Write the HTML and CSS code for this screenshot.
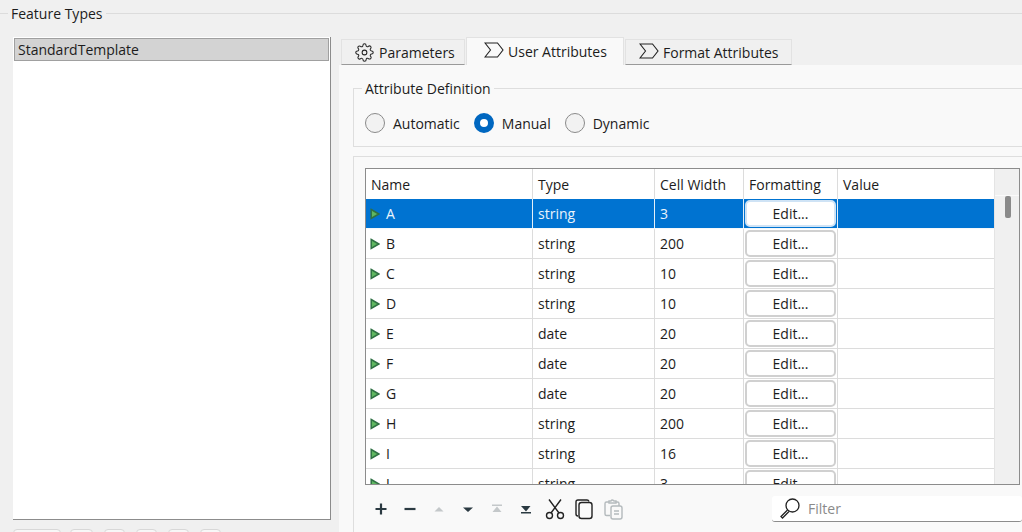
FILE: index.html
```html
<!DOCTYPE html>
<html lang="en">
<head>
    <meta charset="UTF-8">
    <title>Feature Types</title>
    <link rel="stylesheet" href="styles.css">
</head>
<body>
    <svg class="defs" width="0" height="0">
        <symbol id="tag" viewBox="0 0 20 18">
            <path d="M1 2H13.5L19 9L13.5 16H1L6.5 9Z" fill="none" stroke="#222" stroke-width="1.1"/>
        </symbol>
        <symbol id="arrow" viewBox="0 0 10 12">
            <path d="M1.2 1.5L8.8 6L1.2 10.5Z" fill="#5fb760" stroke="#2f7044" stroke-width="1.5"/>
        </symbol>
    </svg>

    <div class="group-title">Feature Types</div>

    <div class="split">
        <div class="left-col">
            <div class="listbox">
                <div class="list-item">StandardTemplate</div>
            </div>
            <div class="list-buttons">
                <span class="mini-btn wide"></span>
                <span class="mini-btn first"></span>
                <span class="mini-btn"></span>
                <span class="mini-btn"></span>
                <span class="mini-btn"></span>
                <span class="mini-btn"></span>
            </div>
        </div>

        <div class="right-col">
            <div class="tabs">
                <div class="tab tab-params">
                    <svg class="tab-icon" viewBox="0 0 24 24" fill="none" stroke="#222" stroke-width="1.3"><circle cx="12" cy="12" r="3"/><path d="M19.4 15a1.65 1.65 0 0 0 .33 1.82l.06.06a2 2 0 0 1 0 2.83 2 2 0 0 1-2.83 0l-.06-.06a1.65 1.65 0 0 0-1.82-.33 1.65 1.65 0 0 0-1 1.51V21a2 2 0 0 1-2 2 2 2 0 0 1-2-2v-.09A1.65 1.65 0 0 0 9 19.4a1.65 1.65 0 0 0-1.82.33l-.06.06a2 2 0 0 1-2.83 0 2 2 0 0 1 0-2.83l.06-.06a1.65 1.65 0 0 0 .33-1.82 1.65 1.65 0 0 0-1.51-1H3a2 2 0 0 1-2-2 2 2 0 0 1 2-2h.09A1.65 1.65 0 0 0 4.6 9a1.65 1.65 0 0 0-.33-1.82l-.06-.06a2 2 0 0 1 0-2.83 2 2 0 0 1 2.83 0l.06.06a1.65 1.65 0 0 0 1.82.33H9a1.65 1.65 0 0 0 1-1.51V3a2 2 0 0 1 2-2 2 2 0 0 1 2 2v.09a1.65 1.65 0 0 0 1 1.51 1.65 1.65 0 0 0 1.82-.33l.06-.06a2 2 0 0 1 2.83 0 2 2 0 0 1 0 2.83l-.06.06a1.65 1.65 0 0 0-.33 1.82V9a1.65 1.65 0 0 0 1.51 1H21a2 2 0 0 1 2 2 2 2 0 0 1-2 2h-.09a1.65 1.65 0 0 0-1.51 1z"/></svg>
                    Parameters
                </div>
                <div class="tab tab-active">
                    <svg class="tab-icon tag"><use href="#tag"/></svg>
                    User Attributes
                </div>
                <div class="tab tab-format">
                    <svg class="tab-icon tag"><use href="#tag"/></svg>
                    Format Attributes
                </div>
            </div>

            <div class="panel">
                <fieldset class="attr-def">
                    <legend>Attribute Definition</legend>
                    <div class="radios">
                        <span class="radio"></span><label class="radio-label">Automatic</label>
                        <span class="radio checked"></span><label class="radio-label">Manual</label>
                        <span class="radio"></span><label class="radio-label">Dynamic</label>
                    </div>
                </fieldset>

                <div class="attr-table-group">
                    <div class="table-frame">
                        <div class="grid">
                            <div class="row head">
                                <div class="cell">Name</div><div class="cell">Type</div><div class="cell">Cell Width</div><div class="cell">Formatting</div><div class="cell">Value</div>
                            </div>
                            <div class="row selected">
                                <div class="cell name"><svg class="arrow"><use href="#arrow"/></svg>A</div><div class="cell">string</div><div class="cell">3</div><div class="cell btn-cell"><span class="edit">Edit...</span></div><div class="cell"></div>
                            </div>
                            <div class="row">
                                <div class="cell name"><svg class="arrow"><use href="#arrow"/></svg>B</div><div class="cell">string</div><div class="cell">200</div><div class="cell btn-cell"><span class="edit">Edit...</span></div><div class="cell"></div>
                            </div>
                            <div class="row">
                                <div class="cell name"><svg class="arrow"><use href="#arrow"/></svg>C</div><div class="cell">string</div><div class="cell">10</div><div class="cell btn-cell"><span class="edit">Edit...</span></div><div class="cell"></div>
                            </div>
                            <div class="row">
                                <div class="cell name"><svg class="arrow"><use href="#arrow"/></svg>D</div><div class="cell">string</div><div class="cell">10</div><div class="cell btn-cell"><span class="edit">Edit...</span></div><div class="cell"></div>
                            </div>
                            <div class="row">
                                <div class="cell name"><svg class="arrow"><use href="#arrow"/></svg>E</div><div class="cell">date</div><div class="cell">20</div><div class="cell btn-cell"><span class="edit">Edit...</span></div><div class="cell"></div>
                            </div>
                            <div class="row">
                                <div class="cell name"><svg class="arrow"><use href="#arrow"/></svg>F</div><div class="cell">date</div><div class="cell">20</div><div class="cell btn-cell"><span class="edit">Edit...</span></div><div class="cell"></div>
                            </div>
                            <div class="row">
                                <div class="cell name"><svg class="arrow"><use href="#arrow"/></svg>G</div><div class="cell">date</div><div class="cell">20</div><div class="cell btn-cell"><span class="edit">Edit...</span></div><div class="cell"></div>
                            </div>
                            <div class="row">
                                <div class="cell name"><svg class="arrow"><use href="#arrow"/></svg>H</div><div class="cell">string</div><div class="cell">200</div><div class="cell btn-cell"><span class="edit">Edit...</span></div><div class="cell"></div>
                            </div>
                            <div class="row">
                                <div class="cell name"><svg class="arrow"><use href="#arrow"/></svg>I</div><div class="cell">string</div><div class="cell">16</div><div class="cell btn-cell"><span class="edit">Edit...</span></div><div class="cell"></div>
                            </div>
                            <div class="row">
                                <div class="cell name"><svg class="arrow"><use href="#arrow"/></svg>J</div><div class="cell">string</div><div class="cell">3</div><div class="cell btn-cell"><span class="edit">Edit...</span></div><div class="cell"></div>
                            </div>
                        </div>
                        <div class="scrollbar">
                            <div class="scroll-head"></div>
                            <div class="scroll-thumb"></div>
                        </div>
                    </div>

                    <div class="toolbar">
                        <div class="tools">
                            <svg class="tool" viewBox="0 0 16 16"><path d="M8 2.5V13.5M2.5 8H13.5" stroke="#2b3a42" stroke-width="2.2"/></svg>
                            <svg class="tool" viewBox="0 0 16 16"><path d="M2.5 8H13.5" stroke="#2b3a42" stroke-width="2.2"/></svg>
                            <svg class="tool" viewBox="0 0 16 16"><path d="M3.5 10.5L8 6L12.5 10.5Z" fill="#c4c8ca"/></svg>
                            <svg class="tool" viewBox="0 0 16 16"><path d="M3 6.5H13L8 11Z" fill="#2b3a42"/></svg>
                            <svg class="tool" viewBox="0 0 16 16"><path d="M3 3.5H13V5H3ZM8 5.5L12.5 11H3.5Z" fill="#c4c8ca"/></svg>
                            <svg class="tool" viewBox="0 0 16 16"><path d="M3 5H12.5L8 10.5ZM3 11H13V12.5H3Z" fill="#2b3a42"/></svg>
                            <svg class="tool big" viewBox="0 0 22 22" fill="none" stroke="#222" stroke-width="1.4"><circle cx="5.5" cy="17.5" r="3"/><circle cx="16.5" cy="17.5" r="3"/><path d="M7 15L17 1.5M15 15L5 1.5"/></svg>
                            <svg class="tool big" viewBox="0 0 22 22" fill="none" stroke="#222" stroke-width="1.4"><path d="M16 3.5Q15.5 2 14 2H5Q3 2 3 4V16Q3 18 5 18"/><rect x="6" y="4.5" width="13" height="16" rx="2.5"/></svg>
                            <svg class="tool big" viewBox="0 0 22 22" fill="none" stroke="#b4babd" stroke-width="1.4"><path d="M7 4H4.5Q3 4 3 5.5V16Q3 17.5 4.5 17.5H8"/><path d="M7 5V3H9Q10 1 12 3H14V5Z"/><path d="M14 4H15.5Q17 4 17 5.5V8"/><rect x="9" y="8" width="11" height="13" rx="2"/><path d="M12 13H17M12 16H17"/></svg>
                        </div>
                        <div class="filter">
                            <svg class="filter-icon" viewBox="0 0 22 22" fill="none" stroke="#222" stroke-width="1.3"><circle cx="13.5" cy="8.5" r="6.5"/><path d="M8.5 13L2 19.5L3.5 21L10 14.5"/></svg>
                            <span class="filter-text">Filter</span>
                        </div>
                    </div>
                </div>
            </div>
        </div>
    </div>
</body>
</html>
```

FILE: styles.css
```css
* {
    margin: 0;
    padding: 0;
    box-sizing: border-box;
}

html, body {
    height: 532px;
    overflow: hidden;
}

body {
    font-family: 'Open Sans', 'Noto Sans', sans-serif;
    font-size: 14px;
    color: #1c1c1c;
    background-color: #f0f0f0;
}

.defs {
    display: block;
    height: 0;
}

.group-title {
    display: flex;
    align-items: center;
    gap: 3px;
    height: 28px;
    padding-bottom: 2px;
}

.group-title::before,
.group-title::after {
    content: '';
    height: 1px;
    background-color: #dcdcdc;
}

.group-title::before {
    width: 8px;
}

.group-title::after {
    flex: 1;
}

.split {
    display: flex;
    padding-left: 13px;
    padding-top: 9px;
}

/* left side */
.left-col {
    width: 318px;
    margin-right: 8px;
}

.listbox {
    height: 483px;
    background-color: white;
    border-right: 1px solid #8c8c8c;
    border-bottom: 1px solid #8c8c8c;
    padding: 1px;
}

.list-item {
    height: 23px;
    line-height: 22px;
    padding-left: 3px;
    background-color: #d3d3d3;
    border: 1px solid #a0a0a0;
}

.list-buttons {
    display: flex;
    gap: 11px;
    margin-top: 9px;
}

.mini-btn {
    width: 21px;
    height: 12px;
    background-color: #f7f7f7;
    border: 1px solid #d8d8d8;
    border-radius: 4px;
}

.mini-btn.wide {
    width: 48px;
    margin-right: -2px;
}

.mini-btn.first {
    width: 23px;
}

/* tabs */
.right-col {
    flex: 1;
    margin-top: -1px;
    min-width: 0;
}

.tabs {
    display: flex;
    align-items: flex-end;
    height: 29px;
    padding-left: 2px;
    gap: 1px;
}

.tab {
    display: flex;
    align-items: center;
    height: 26px;
    background-color: #f0f0f0;
    border: 1px solid #e2e2e2;
    border-bottom: 1px solid #9a9a9a;
}

.tab-params {
    width: 124px;
    padding-left: 13px;
}

.tab-active {
    width: 158px;
    height: 28px;
    padding-left: 17px;
    background-color: #f9f9f9;
    border-bottom: none;
}

.tab-format {
    width: 167px;
    padding-left: 13px;
}

.tab-icon {
    width: 19px;
    height: 19px;
    margin-right: 5px;
}

.tab-icon.tag {
    width: 20px;
    height: 18px;
    margin-right: 4px;
    margin-bottom: 3px;
}

/* panel */
.panel {
    height: 470px;
    background-color: #f9f9f9;
    padding: 14px 0 0 14px;
    overflow: hidden;
}

.attr-def {
    height: 68px;
    border: 1px solid #dedede;
    border-right: none;
    padding-left: 8px;
}

.attr-def legend {
    padding: 0 3px;
}

.radios {
    display: flex;
    align-items: center;
    margin-top: 15px;
    margin-left: 3px;
}

.radio {
    width: 20px;
    height: 20px;
    border-radius: 50%;
    border: 1px solid #8a8a8a;
    background-color: #f2f2f2;
    margin-right: 8px;
}

.radio.checked {
    border: 6px solid #0067c0;
    background-color: white;
}

.radio-label {
    margin-right: 14px;
}

.attr-table-group {
    margin-top: 9px;
    border-top: 1px solid #dedede;
    border-left: 1px solid #dedede;
    padding: 11px 2px 0 11px;
}

.table-frame {
    display: flex;
    height: 317px;
    background-color: white;
    border: 1px solid #8c8c8c;
    overflow: hidden;
}

/* attribute table */
.grid {
    width: 628px;
    flex: none;
}

.row {
    display: grid;
    grid-template-columns: 167px 122px 89px 94px 156px;
    height: 30px;
    border-bottom: 1px solid #dcdcdc;
}

.row.head {
    border-bottom: none;
}

.cell {
    display: flex;
    align-items: center;
    padding-left: 5px;
    border-right: 1px solid #dcdcdc;
    overflow: hidden;
    white-space: nowrap;
}

.row .cell:last-child {
    border-right: none;
}

.cell.name {
    padding-left: 4px;
}

.row.selected {
    background-color: #0073d1;
    color: #eaf4fc;
    border-bottom-color: #f4f8fb;
}

.row.selected .cell {
    border-right-color: #e6f0f8;
}

.arrow {
    width: 10px;
    height: 12px;
    margin-right: 6px;
    flex: none;
}

.btn-cell {
    padding: 1px;
}

.edit {
    display: block;
    width: 91px;
    height: 27px;
    line-height: 24px;
    text-align: center;
    color: #1c1c1c;
    background-color: white;
    border: 2px solid #d0d0d0;
    border-radius: 5px;
}

.selected .edit {
    border-color: #cfe3f5;
}

.scrollbar {
    position: relative;
    flex: 1;
    background-color: #f0f0f0;
    border-left: 1px solid #e4e4e4;
}

.scroll-head {
    height: 27px;
    border-bottom: 1px solid #fafafa;
}

.scroll-thumb {
    position: absolute;
    top: 27px;
    left: 10px;
    width: 6px;
    height: 22px;
    border-radius: 2px;
    background-color: #8a8a8a;
}

/* bottom toolbar */
.toolbar {
    display: flex;
    align-items: center;
    justify-content: space-between;
    height: 47px;
}

.tools {
    display: flex;
    align-items: center;
    gap: 13px;
    padding-left: 8px;
}

.tool {
    width: 16px;
    height: 16px;
}

.tool.big {
    width: 22px;
    height: 22px;
    margin: 0 -3px;
}

.filter {
    display: flex;
    align-items: center;
    width: 250px;
    height: 26px;
    margin-right: -2px;
    background-color: white;
    border-bottom: 1px solid #8c8c8c;
    border-radius: 3px;
    padding-left: 7px;
}

.filter-icon {
    width: 22px;
    height: 22px;
    margin-right: 7px;
}

.filter-text {
    color: #8a8a8a;
}
```
